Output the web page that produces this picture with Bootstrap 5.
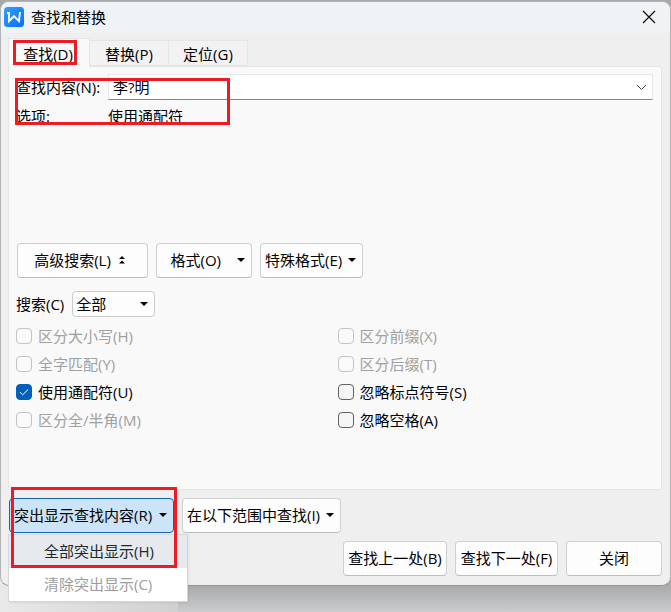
<!DOCTYPE html>
<html lang="zh-CN">
<head>
<meta charset="utf-8">
<meta name="viewport" content="width=device-width, initial-scale=1">
<title>查找和替换</title>
<link href="https://cdn.jsdelivr.net/npm/bootstrap@5.3.0/dist/css/bootstrap.min.css" rel="stylesheet">
<style>
body{font:15px/20px "Open Sans","Noto Sans CJK SC",sans-serif;color:#000;background:linear-gradient(#a6a8aa calc(100% - 28px),#cbccce);}
.backdrop-left{left:0;bottom:0;width:178px;height:60px;background:linear-gradient(90deg,#e9e9e9,#d0d0d1)}
.dialog{background:#efefef;border:1px solid #b4b4b4;border-bottom-color:#949494;border-radius:9px;margin-top:1px}
.title-bar{height:31px;background:#eff3f5;border-radius:8px 8px 0 0;padding:0 13px 1px 3px;gap:7px}
.close-btn{width:16px;height:16px}
.dialog-main{padding:6px 8px 9px 7px}
.tabs{border:0;height:27px;padding-top:1px}
.tabs .nav-item{margin:0}
.tabs .nav-link{border:1px solid #e5e5e5;border-left-width:0;border-radius:0;margin:0;height:26px;padding:3px 0 0;width:79px;color:#000;background:#f2f2f2}
.tabs .nav-link.active{width:82px;height:29px;margin-top:-2px;border:1px solid #e5e5e5;border-bottom:0;background:#f9f9f9;color:#000;position:relative;z-index:1;padding:5px 2px 0 0}
.pane{background:#f9f9f9;border:1px solid #e5e5e5;padding:7px 8px 55px 7px}
.field-label{width:92px;flex:none;white-space:nowrap}
.combo{height:26px;border:1px solid #e8e8e8;border-bottom-color:#858585;background:#fff}
.combo input{font:inherit;padding:0 4px;border:0;background:none;color:#000;min-width:0;outline:0}
.combo button{width:22px}
.options-row{padding-top:6px;margin-bottom:117px}
.tool{font:inherit;height:35px;padding:0 0 1px;border:1px solid #cfcfcf;border-bottom-color:#bdbdbd;border-radius:4px;background:#fdfdfd;color:#000;white-space:nowrap}
.tool:hover{background:#fdfdfd;color:#000;border-color:#c5c5c5}
.tool-drop{padding-left:4px;padding-right:6px}
.tool-row{padding-left:1px}
.w-adv{width:131px;padding-right:6px}
.w-fmt{width:96px}
.w-spec{width:103px}
.w-mark{width:165px}
.w-scope{width:159px}
.w-prev{width:104px}
.w-next{width:103px}
.w-close{width:96px}
.tool.open,.tool.open:hover{background:#cce4f7;border-color:#1762a6}
.scope{width:83px;height:26px;font:inherit;border:1px solid #cacaca;border-radius:4px;padding:0 20px 1px 3px;appearance:none;color:#000;background:#fdfdfd url("data:image/svg+xml,%3Csvg xmlns='http://www.w3.org/2000/svg' width='8' height='4'%3E%3Cpath d='M0 0h8L4 4z'/%3E%3C/svg%3E") no-repeat right 6px center}
.search-row{margin-top:13px;padding-bottom:5px}
.opt{height:28px;padding:0;margin:0;gap:6px}
.opt .form-check-input{width:16px;height:16px;margin:0;float:none;border:1px solid #626262;border-radius:4px;background-color:#f5f5f5;flex:none}
.opt .form-check-input:checked{background-color:#005fb8;border-color:#005fb8;background-size:12px;background-image:url("data:image/svg+xml,%3Csvg xmlns='http://www.w3.org/2000/svg' viewBox='0 0 12 12'%3E%3Cpath d='M2 6.2l2.7 2.6L10 3.5' fill='none' stroke='white'/%3E%3C/svg%3E")}
.opt .form-check-input:disabled{border-color:#c4c4c4;background-color:#fafafa;opacity:1}
.opt .form-check-input:disabled~.form-check-label{color:#a0a0a0;opacity:1}
.second-col{padding-left:3px}
.lower{padding-top:8px;padding-left:1px}
.actions{margin-top:8px}
.drop-menu{left:-1px;top:100%;margin-top:1px;width:180px;background:#fff;border:1px solid #d4d7da;z-index:3;box-shadow:1px 1px 2px #0001}
.drop-menu button{font:inherit;display:block;width:100%;height:33px;border:0;background:#fff;color:#9d9d9d;padding:0 0 1px 35px;text-align:left}
.drop-menu button.current{background:#e6eaef;color:#1e2730}
.highlight-box{border:3px solid #ed1c24;pointer-events:none;z-index:4}
.hl-tab{left:5px;top:1px;width:64px;height:25px}
.hl-find{left:6px;top:11px;width:215px;height:47px}
.hl-mark{left:2px;top:-11px;width:166px;height:81px}
</style>
<script src="https://cdn.jsdelivr.net/npm/bootstrap@5.3.0/dist/js/bootstrap.bundle.min.js"></script>
</head>
<body class="min-vh-100 position-relative">
<div class="backdrop-left position-absolute"></div>
<main class="dialog position-relative">
  <header class="title-bar d-flex align-items-center">
    <svg width="20" height="20" viewBox="0 0 20 20" aria-hidden="true"><defs><linearGradient id="g" x2="1" y2="1"><stop stop-color="#30a3ff"/><stop offset="1" stop-color="#086cff"/></linearGradient></defs><rect width="20" height="20" rx="3.5" fill="url(#g)"/><path d="M3 6h2v8.2L10 9l5 5.2L16 5" fill="none" stroke="#fff" stroke-width="1.9"/></svg>
    <span class="flex-grow-1">查找和替换</span>
    <button type="button" class="close-btn btn p-0 border-0 d-flex align-items-center justify-content-center" aria-label="关闭窗口"><svg width="14" height="14" viewBox="0 0 14 14"><path d="M1 1l12 12M13 1L1 13" stroke="#111" stroke-width="1.3"/></svg></button>
  </header>

  <div class="dialog-main">
    <div class="position-relative">
      <ul class="nav nav-tabs tabs text-center flex-nowrap">
        <li class="nav-item"><a class="nav-link active" href="#find">查找(D)</a></li>
        <li class="nav-item"><a class="nav-link" href="#replace">替换(P)</a></li>
        <li class="nav-item"><a class="nav-link" href="#goto">定位(G)</a></li>
      </ul>
      <div class="highlight-box hl-tab position-absolute"></div>
    </div>

    <section class="pane position-relative" id="find">
      <div class="d-flex align-items-center">
        <label class="field-label" for="term">查找内容(N):</label>
        <div class="combo d-flex flex-grow-1">
          <input id="term" class="flex-grow-1" type="text" value="李?明">
          <button type="button" class="btn p-0 border-0 d-flex align-items-center justify-content-center" aria-label="查找历史"><svg width="11" height="7" viewBox="0 0 11 7"><path d="M1 1l4.5 4.5L10 1" fill="none" stroke="#444"/></svg></button>
        </div>
      </div>
      <div class="options-row d-flex"><span class="field-label">选项:</span><span>使用通配符</span></div>
      <div class="highlight-box hl-find position-absolute"></div>

      <div class="tool-row d-flex gap-2">
        <button type="button" class="btn tool w-adv d-flex align-items-center justify-content-center gap-2">高级搜索(L) <svg width="6" height="8" viewBox="0 0 6 8"><path d="M0 3h6L3 0zM0 7.5h6l-3-3z"/></svg></button>
        <button type="button" class="btn tool tool-drop w-fmt d-flex align-items-center justify-content-end gap-3"><span>格式(O)</span><svg width="8" height="4" viewBox="0 0 8 4"><path d="M0 0h8L4 4z"/></svg></button>
        <button type="button" class="btn tool tool-drop w-spec d-flex align-items-center justify-content-between">特殊格式(E)<svg width="8" height="4" viewBox="0 0 8 4"><path d="M0 0h8L4 4z"/></svg></button>
      </div>

      <div class="search-row d-flex align-items-center">
        <label for="dir" class="me-2">搜索(C)</label>
        <select id="dir" class="scope"><option>全部</option><option>向下</option><option>向上</option></select>
      </div>

      <div class="row g-0">
        <div class="col-6">
          <div class="opt form-check d-flex align-items-center"><input class="form-check-input" type="checkbox" id="o1" disabled><label class="form-check-label" for="o1">区分大小写(H)</label></div>
          <div class="opt form-check d-flex align-items-center"><input class="form-check-input" type="checkbox" id="o2" disabled><label class="form-check-label" for="o2">全字匹配(Y)</label></div>
          <div class="opt form-check d-flex align-items-center"><input class="form-check-input" type="checkbox" id="o3" checked><label class="form-check-label" for="o3">使用通配符(U)</label></div>
          <div class="opt form-check d-flex align-items-center"><input class="form-check-input" type="checkbox" id="o4" disabled><label class="form-check-label" for="o4">区分全/半角(M)</label></div>
        </div>
        <div class="col-6 second-col">
          <div class="opt form-check d-flex align-items-center"><input class="form-check-input" type="checkbox" id="o5" disabled><label class="form-check-label" for="o5">区分前缀(X)</label></div>
          <div class="opt form-check d-flex align-items-center"><input class="form-check-input" type="checkbox" id="o6" disabled><label class="form-check-label" for="o6">区分后缀(T)</label></div>
          <div class="opt form-check d-flex align-items-center"><input class="form-check-input" type="checkbox" id="o7"><label class="form-check-label" for="o7">忽略标点符号(S)</label></div>
          <div class="opt form-check d-flex align-items-center"><input class="form-check-input" type="checkbox" id="o8"><label class="form-check-label" for="o8">忽略空格(A)</label></div>
        </div>
      </div>
    </section>

    <div class="lower d-flex gap-2">
      <div class="position-relative">
        <button type="button" class="btn tool tool-drop open w-mark d-flex align-items-center justify-content-between" aria-expanded="true">突出显示查找内容(R)<svg width="8" height="4" viewBox="0 0 8 4"><path d="M0 0h8L4 4z"/></svg></button>
        <div class="drop-menu position-absolute">
          <button type="button" class="current">全部突出显示(H)</button>
          <button type="button" disabled>清除突出显示(C)</button>
        </div>
        <div class="highlight-box hl-mark position-absolute"></div>
      </div>
      <button type="button" class="btn tool tool-drop w-scope d-flex align-items-center justify-content-between">在以下范围中查找(I)<svg width="8" height="4" viewBox="0 0 8 4"><path d="M0 0h8L4 4z"/></svg></button>
    </div>
    <div class="actions d-flex justify-content-end gap-2">
      <button type="button" class="btn tool w-prev">查找上一处(B)</button>
      <button type="button" class="btn tool w-next">查找下一处(F)</button>
      <button type="button" class="btn tool w-close">关闭</button>
    </div>
  </div>
</main>
</body>
</html>
